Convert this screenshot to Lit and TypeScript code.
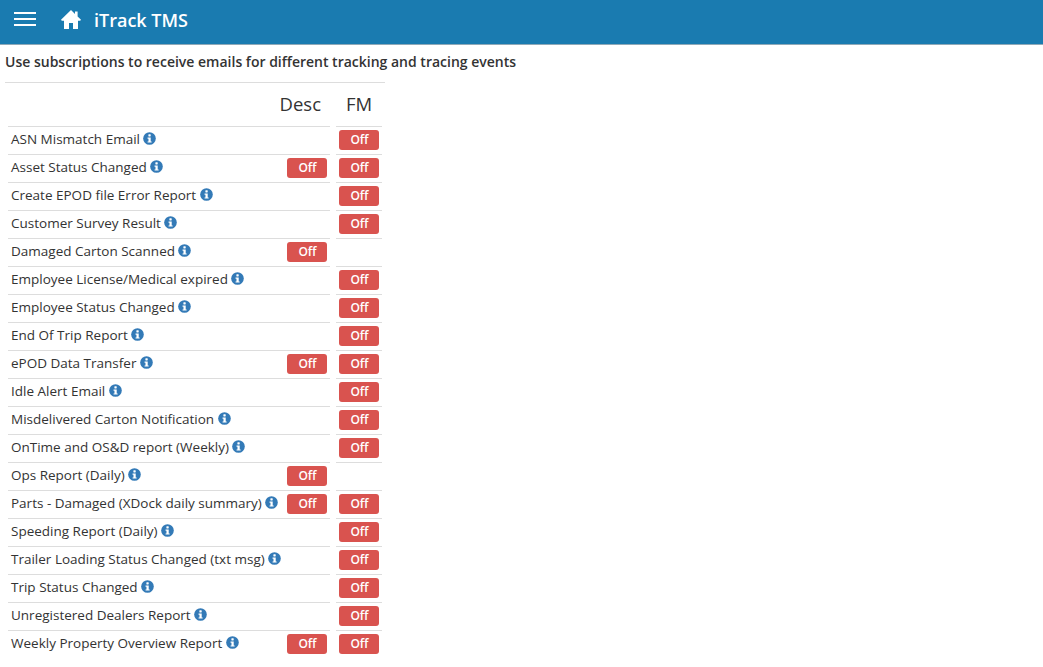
import { LitElement, html, css, svg } from "lit";
import { customElement } from "lit/decorators.js";

const rows: [string, boolean, boolean][] = [
  ["ASN Mismatch Email", false, true],
  ["Asset Status Changed", true, true],
  ["Create EPOD file Error Report", false, true],
  ["Customer Survey Result", false, true],
  ["Damaged Carton Scanned", true, false],
  ["Employee License/Medical expired", false, true],
  ["Employee Status Changed", false, true],
  ["End Of Trip Report", false, true],
  ["ePOD Data Transfer", true, true],
  ["Idle Alert Email", false, true],
  ["Misdelivered Carton Notification", false, true],
  ["OnTime and OS&D report (Weekly)", false, true],
  ["Ops Report (Daily)", true, false],
  ["Parts - Damaged (XDock daily summary)", true, true],
  ["Speeding Report (Daily)", false, true],
  ["Trailer Loading Status Changed (txt msg)", false, true],
  ["Trip Status Changed", false, true],
  ["Unregistered Dealers Report", false, true],
  ["Weekly Property Overview Report", true, true],
];

const info = svg`<circle cx="7" cy="7" r="6.800" fill="#337ab7"/><rect x="5.800" y="2.500" width="2.500" height="2.300" rx=".5" fill="#fff"/><path d="M4.900 5.900h3.400v4.200h1v1.300H4.900v-1.300h1V7.200h-1z" fill="#fff"/>`;

@customElement("app-root")
export class AppRoot extends LitElement {
  static styles = css`
    :host { display: block; font-family: "Open Sans", "Noto Sans", sans-serif; color: #333; background: #fff; height: 667px; overflow: hidden; }
    .bar { height: 44px; background: #1a7bb0; border-bottom: 1px solid #8fa9b8; display: flex; align-items: center; color: #fff; }
    .burger { margin-left: 14px; width: 22px; display: flex; flex-direction: column; gap: 4px; margin-top: -7px; }
    .burger i { display: block; height: 2px; background: #fff; }
    .home { margin-left: 25px; width: 20px; height: 19px; margin-top: -6px; }
    .title { margin-left: 13px; font-size: 18px; font-weight: 600; margin-top: -5px; line-height: 24px; }
    .lead { margin: 0; padding: 7px 0 0 5px; font-size: 14px; font-weight: 600; line-height: 20px; color: #333; }
    .panel { margin: 10px 0 0 5px; width: 380px; border-top: 1px solid #ddd; padding-left: 3px; box-sizing: border-box; }
    .grid { display: grid; grid-template-columns: 322px 46px; column-gap: 6px; }
    .h { height: 43px; display: flex; align-items: center; justify-content: flex-end; font-size: 18.500px; font-weight: 500; padding: 0 9px 2px 0; box-sizing: border-box; color: #333; }
    .fm { padding-right: 0; justify-content: center; }
    .c { border-top: 1px solid #ddd; display: flex; align-items: center; padding-bottom: 2px; height: 25px; }
    .name { padding-left: 3px; font-size: 13.500px; font-weight: 500; flex: 1; display: flex; align-items: center; gap: 3.500px; white-space: nowrap; color: #333; margin-top: -2px; }
    .name svg { width: 13px; height: 13px; flex: none; margin-top: -1px; }
    .btn { width: 40px; height: 20px; padding-left: 1px; box-sizing: border-box; border-radius: 3px; background: #d9534f; color: #fff; font-size: 12px; font-weight: 600; display: flex; align-items: center; justify-content: center; flex: none; }
    .d .btn { margin-right: 3px; }
    .f { justify-content: center; }
  `;

  render() {
    return html`
      <div class="bar">
        <div class="burger"><i></i><i></i><i></i></div>
        <svg class="home" viewBox="0 0 20 19"><path d="M10 0 0 9.800l.8 1H3V19h5v-6h4v6h5v-8.200h2.200l.8-1-3.400-3.300V1.500h-2.600v2.400z" fill="#fff"/></svg>
        <div class="title">iTrack TMS</div>
      </div>
      <p class="lead">Use subscriptions to receive emails for different tracking and tracing events</p>
      <div class="panel">
        <div class="grid">
          <div class="h">Desc</div><div class="h fm">FM</div>
          ${rows.map(
            ([n, d, f]) => html`
              <div class="c d">
                <div class="name">${n} <svg viewBox="0 0 14 14">${info}</svg></div>
                ${d ? html`<div class="btn">Off</div>` : ""}
              </div>
              <div class="c f">${f ? html`<div class="btn">Off</div>` : ""}</div>
            `
          )}
        </div>
      </div>
    `;
  }
}
